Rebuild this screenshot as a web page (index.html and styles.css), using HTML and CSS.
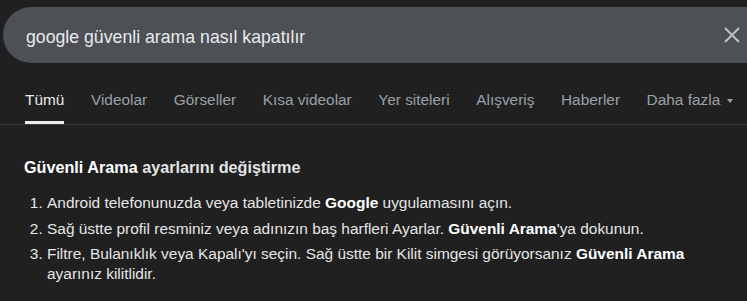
FILE: index.html
```html
<!DOCTYPE html>
<html lang="tr">
<head>
<meta charset="utf-8">
<title>google güvenli arama nasıl kapatılır</title>
<link rel="stylesheet" href="styles.css">
</head>
<body>
  <header class="search">
    <span class="query">google güvenli arama nasıl kapatılır</span>
    <svg class="clear" width="16" height="16" viewBox="0 0 16 16" aria-hidden="true">
      <path d="M1 1 L15 15 M15 1 L1 15" stroke="#bdc1c6" stroke-width="2" fill="none"/>
    </svg>
  </header>

  <nav class="tabs">
    <a class="tab active">Tümü</a>
    <a class="tab">Videolar</a>
    <a class="tab">Görseller</a>
    <a class="tab">Kısa videolar</a>
    <a class="tab">Yer siteleri</a>
    <a class="tab">Alışveriş</a>
    <a class="tab">Haberler</a>
    <a class="tab more">Daha fazla <span class="caret"></span></a>
  </nav>

  <main class="content">
    <h2 class="heading"><b>Güvenli Arama</b> ayarlarını değiştirme</h2>
    <ol class="steps">
      <li>Android telefonunuzda veya tabletinizde <b>Google</b> uygulamasını açın.</li>
      <li>Sağ üstte profil resminiz veya adınızın baş harfleri Ayarlar. <b>Güvenli Arama</b>'ya dokunun.</li>
      <li>Filtre, Bulanıklık veya Kapalı'yı seçin. Sağ üstte bir Kilit simgesi görüyorsanız <b>Güvenli Arama</b> ayarınız kilitlidir.</li>
    </ol>
  </main>
</body>
</html>
```

FILE: styles.css
```css
html, body {
  margin: 0;
  padding: 0;
  background: #202020;
}

body {
  font-family: "Liberation Sans", Arial, sans-serif;
  color: #e6e6e6;
  width: 747px;
  overflow: hidden;
}

.search {
  display: flex;
  align-items: center;
  height: 52px;
  padding-top: 4px;
  margin: 7px 0 0 3px;
  padding-left: 23px;
  padding-right: 7px;
  background: #4d5055;
  border-radius: 28px 0 0 28px;
}

.query {
  font-size: 17.7px;
  color: #e8eaed;
  line-height: 20px;
}

.clear {
  margin-left: auto;
  margin-top: -4px;
  width: 16px;
  height: 16px;
}

.tabs {
  display: flex;
  gap: 26.6px;
  margin-top: 27px;
  padding-left: 25px;
  border-bottom: 1px solid #3a3b3d;
}

.tab {
  font-size: 15.4px;
  line-height: 20px;
  color: #9aa0a6;
  padding-bottom: 11px;
  border-bottom: 3px solid transparent;
  white-space: nowrap;
}

.tab.active {
  color: #e8eaed;
  border-bottom-color: #e8eaed;
}

.more {
  display: flex;
  align-items: center;
  align-self: flex-start;
}

.caret {
  display: inline-block;
  margin-left: 7px;
  margin-top: 1px;
  width: 0;
  height: 0;
  border-left: 3.5px solid transparent;
  border-right: 3.5px solid transparent;
  border-top: 4px solid #9aa0a6;
}

.content {
  padding: 0 24px;
}

.heading {
  margin: 32px 0 0;
  font-size: 16.2px;
  line-height: 20px;
  font-weight: bold;
  color: #e3e3e3;
}

.heading b {
  color: #ffffff;
}

.steps {
  margin: 16px 0 0;
  padding-left: 23px;
  font-size: 15.45px;
  line-height: 20px;
}

.steps li {
  margin-bottom: 5.7px;
}

.steps b {
  color: #ffffff;
}
```
